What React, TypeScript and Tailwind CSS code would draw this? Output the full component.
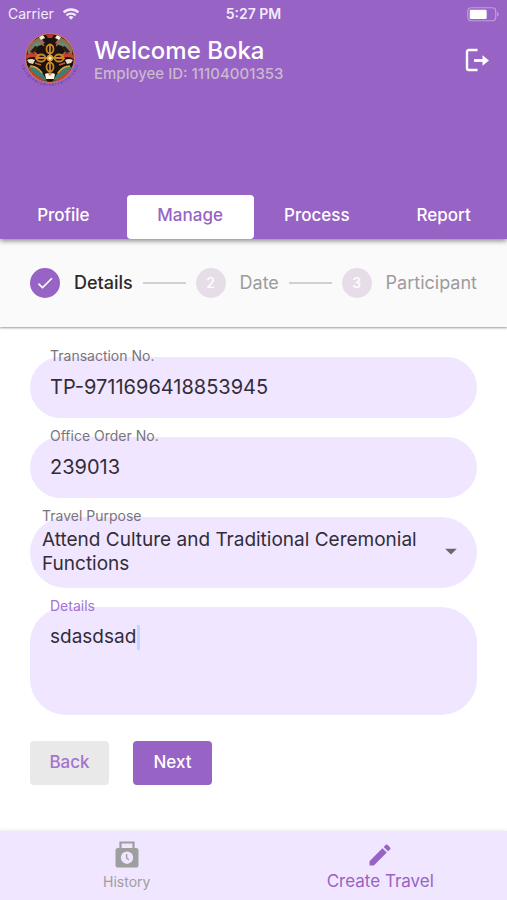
import { useState } from 'react';
import type { ReactNode } from 'react';
import { MdArrowDropDown, MdCheck, MdEdit } from 'react-icons/md';

const TABS = ['Profile', 'Manage', 'Process', 'Report'];

const STEPS = ['Details', 'Date', 'Participant'];

const PURPOSES = [
  'Attend Culture and Traditional Ceremonial Functions',
  'Attend Meeting',
  'Attend Training',
];

function WifiIcon() {
  return (
    <svg viewBox="0 0 18 13" className="h-3 w-[18px]" fill="none" stroke="currentColor" strokeWidth="2.5" aria-hidden="true">
      <path d="M1 4.8a11.6 11.6 0 0 1 16 0" />
      <path d="M4 8a7.4 7.4 0 0 1 10 0" />
      <path d="M9 12.8 6.3 10a4 4 0 0 1 5.4 0Z" fill="currentColor" stroke="none" />
    </svg>
  );
}

function BatteryIcon() {
  return (
    <svg viewBox="0 0 32 15" className="h-[15px] w-8" aria-hidden="true">
      <rect x="0.75" y="0.75" width="28" height="13" rx="3.5" fill="none" stroke="#c09fe2" strokeWidth="1.2" />
      <rect x="2.7" y="2.7" width="17" height="9.2" rx="1.2" fill="#fff" />
      <path d="M30.2 5v4.6c1-.3 1.5-1.2 1.5-2.3S31.2 5.3 30.2 5Z" fill="#c09fe2" />
    </svg>
  );
}

function LogoutIcon() {
  return (
    <svg viewBox="0 0 24 24" className="size-6" fill="none" stroke="currentColor" strokeWidth="2.4" aria-hidden="true">
      <path d="M12.500 2H4Q2 2 2 4v16Q2 22 4 22h8.500" />
      <path d="M9 12.500H19" strokeWidth="2.800" />
      <path d="M17.500 7.200 24 12.500l-6.500 5.300Z" fill="currentColor" stroke="none" />
    </svg>
  );
}

function HistoryIcon() {
  return (
    <svg viewBox="0 0 24 27" className="h-[27px] w-6" aria-hidden="true">
      <path d="M5.500 8V1.500h13V8" fill="none" stroke="currentColor" strokeWidth="2.200" />
      <rect x="0.500" y="7" width="23" height="19.500" rx="2.600" fill="currentColor" />
      <circle cx="12" cy="16.700" r="6.200" fill="#f0e6ff" />
      <path d="M11.600 13v4l2.200 1.800" fill="none" stroke="currentColor" strokeWidth="1.300" />
    </svg>
  );
}

function Emblem() {
  return (
    <svg viewBox="0 0 60 60" className="size-[60px]" role="img" aria-label="Emblem">
      <clipPath id="disc">
        <circle cx="30" cy="26" r="24" />
      </clipPath>
      <path d="M2.500 33A29 29 0 0 0 57.500 33" fill="none" stroke="#7a4fa3" strokeWidth="2.500" strokeDasharray="1.200 1.600 2 1.400 .8 1.800" />
      <circle cx="30" cy="26" r="25" fill="#d9744a" />
      <g clipPath="url(#disc)">
        <circle cx="30" cy="26" r="24" fill="#1c120f" />
        {/* clouds and dragons */}
        <path d="M7 17q5-9 13-12l5 6-7 3-3 6-7 3Z" fill="#8a6f5c" />
        <path d="M53 17q-5-9-13-12l-5 6 7 3 3 6 7 3Z" fill="#8a6f5c" />
        <path d="M12 15q3-5 8-5l2 3-6 1-2 5ZM48 15q-3-5-8-5l-2 3 6 1 2 5Z" fill="#5f8f74" />
        <path d="M10 20l5-6 3 1-4 6ZM50 20l-5-6-3 1 4 6Z" fill="#2a1a16" />
        <path d="M19 5l4-2 2 3-4 2ZM41 5l-4-2-2 3 4 2Z" fill="#f3ead9" />
        <path d="M26 3q4-3 8 0l-2 3h-4Z" fill="#b43a2c" />
        <path d="M5 24q7-5 14-1l-2 3q-6-3-12 2Z" fill="#c9412e" />
        <path d="M55 24q-7-5-14-1l2 3q6-3 12 2Z" fill="#c9412e" />
        <path d="M7 28q4-2 8 0l-2 4-4-1Z" fill="#e9ddc9" />
        <path d="M53 28q-4-2-8 0l2 4 4-1Z" fill="#e9ddc9" />
        <path d="M8 35q8-3 14 5l5 9q-13-1-19-14Z" fill="#3f7f70" />
        <path d="M52 35q-8-3-14 5l-5 9q13-1 19-14Z" fill="#3f7f70" />
        <path d="M10 34q7 0 12 7M50 34q-7 0-12 7" fill="none" stroke="#e0a33c" strokeWidth="1.500" />
        <path d="M9 38q8 9 15 11M51 38q-8 9-15 11" fill="none" stroke="#c9412e" strokeWidth="3" />
        <path d="M14 20l5 4-4 3M46 20l-5 4 4 3M15 31l6 2M45 31l-6 2M20 9l4 5M40 9l-4 5" fill="none" stroke="#c2643a" strokeWidth="1.500" />
        <path d="M25 42q5-3 10 0l-1 5h-8Z" fill="#fff6e6" />
        <path d="M27 41h6l-3 3Z" fill="#e08a5a" />
        {/* crossed vajra */}
        <g fill="none" stroke="#c9862b" strokeWidth="1.800">
          <path d="M30 12v28M16 26h28" />
          <ellipse cx="30" cy="17" rx="3.500" ry="4.500" />
          <ellipse cx="30" cy="35" rx="3.500" ry="4.500" />
          <ellipse cx="21" cy="26" rx="4.500" ry="3.500" />
          <ellipse cx="39" cy="26" rx="4.500" ry="3.500" />
        </g>
        <circle cx="30" cy="26" r="3.200" fill="#dba546" />
        <circle cx="30" cy="26" r="1.500" fill="#fff0c0" />
      </g>
    </svg>
  );
}

type FieldProps = { id: string; label: string; active?: boolean; inset?: boolean; children: ReactNode };

function Field({ id, label, active, inset, children }: FieldProps) {
  return (
    <div className="relative">
      <label
        htmlFor={id}
        className={`absolute -top-[11px] text-sm ${inset ? 'left-3' : 'left-5'} ${active ? 'text-[#a374d0]' : 'text-[#79747e]'}`}
      >
        {label}
      </label>
      {children}
    </div>
  );
}

export default function App() {
  const [tab, setTab] = useState('Manage');
  const [transactionNo, setTransactionNo] = useState('TP-9711696418853945');
  const [orderNo, setOrderNo] = useState('239013');
  const [purpose, setPurpose] = useState(PURPOSES[0]);
  const [details, setDetails] = useState('sdasdsad');

  return (
    <div className="flex min-h-screen flex-col bg-white font-['Inter',sans-serif] text-[#322d38]">
      {/* Header */}
      <header className="relative z-10 bg-[#9763c5] text-white shadow-[0_2px_5px_rgba(0,0,0,0.45)]">
        <div className="grid h-7 grid-cols-3 items-center px-2 text-sm">
          <div className="flex items-center gap-2 text-[#f3eafb]">
            Carrier
            <WifiIcon />
          </div>
          <div className="text-center font-semibold text-[#f3eafb]">5:27 PM</div>
          <div className="flex justify-end">
            <BatteryIcon />
          </div>
        </div>

        <div className="flex h-[167px] items-start justify-between pt-1 pr-[18px] pl-5">
          <div className="flex gap-3.5">
            <Emblem />
            <div className="pt-1">
              <h1 className="text-2xl leading-[30px] font-medium">Welcome Boka</h1>
              <p className="text-[15px] leading-4 font-medium text-[#cbb8cf]">Employee ID: 11104001353</p>
            </div>
          </div>
          <button type="button" aria-label="Log out" className="mt-4">
            <LogoutIcon />
          </button>
        </div>

        <nav className="grid grid-cols-4">
          {TABS.map((name) => (
            <button
              key={name}
              type="button"
              onClick={() => setTab(name)}
              className={`h-11 rounded pb-0.5 text-[17px] font-medium ${tab === name ? 'bg-white text-[#9763c5]' : 'text-white'}`}
            >
              {name}
            </button>
          ))}
        </nav>
      </header>

      {/* Stepper */}
      <ol className="flex h-[88px] items-center bg-[#fafafa] px-[30px] text-lg shadow-[0_1px_2px_rgba(0,0,0,0.4)]">
        {STEPS.map((step, i) => (
          <li key={step} className={`flex items-center ${i < STEPS.length - 1 ? 'flex-auto' : ''}`}>
            <span
              className={`flex size-[30px] items-center justify-center rounded-full text-white ${i === 0 ? 'bg-[#9763c5]' : 'bg-[#e6dde9] text-sm font-medium'}`}
            >
              {i === 0 ? <MdCheck className="size-5" /> : i + 1}
            </span>
            <span className={`ml-3.5 ${i === 0 ? 'font-medium text-[#2a2a2a]' : 'text-[#9c9c9c]'}`}>{step}</span>
            {i < STEPS.length - 1 && <span className="mx-2.5 h-0.5 flex-1 bg-[#d0d0d0]" />}
          </li>
        ))}
      </ol>

      {/* Form */}
      <form className="flex flex-col gap-[19px] px-[30px] pt-[30px]" onSubmit={(e) => e.preventDefault()}>
        <Field id="transaction" label="Transaction No.">
          <input
            id="transaction"
            value={transactionNo}
            onChange={(e) => setTransactionNo(e.target.value)}
            className="block h-[61px] w-full rounded-full bg-[#f0e6ff] px-5 pb-0.5 text-xl outline-none"
          />
        </Field>
        <Field id="order" label="Office Order No.">
          <input
            id="order"
            value={orderNo}
            onChange={(e) => setOrderNo(e.target.value)}
            className="block h-[61px] w-full rounded-full bg-[#f0e6ff] px-5 pb-0.5 text-xl outline-none"
          />
        </Field>
        <Field id="purpose" label="Travel Purpose" inset>
          <select
            id="purpose"
            value={purpose}
            onChange={(e) => setPurpose(e.target.value)}
            className="block h-[71px] w-full appearance-none rounded-full bg-[#f0e6ff] pr-10 pb-0.5 pl-3 text-[19px] leading-6 whitespace-pre-wrap outline-none"
          >
            {PURPOSES.map((p) => (
              <option key={p}>{p}</option>
            ))}
          </select>
          <MdArrowDropDown className="pointer-events-none absolute top-5 right-3 size-7 text-[#6b6570]" />
        </Field>
        <Field id="details" label="Details" active>
          <textarea
            id="details"
            value={details}
            onChange={(e) => setDetails(e.target.value)}
            className="block h-[108px] w-full resize-none rounded-[36px] bg-[#f0e6ff] px-5 pt-4 text-[19px] leading-7 caret-[#bcd4fb] outline-none"
          />
          <span className="absolute top-[18px] left-[107px] h-[25px] w-[3px] bg-[#c3d6fb]" />
        </Field>

        <div className="flex gap-6 pt-[7px] text-[17px] font-medium">
          <button type="button" className="h-11 w-[79px] rounded bg-[#e9e9e9] text-[#a374d0]">
            Back
          </button>
          <button type="submit" className="h-11 w-[79px] rounded bg-[#9763c5] text-white">
            Next
          </button>
        </div>
      </form>

      {/* Bottom bar */}
      <nav className="mt-auto grid h-[69px] grid-cols-2 bg-[#f0e6ff] shadow-[0_-1px_3px_rgba(0,0,0,0.08)]">
        <a href="#history" className="flex flex-col items-center pt-2.5 text-sm text-[#9e9e9e]">
          <HistoryIcon />
          <span className="pt-1">History</span>
        </a>
        <a href="#create" className="flex flex-col items-center pt-2.5 text-[17px] text-[#9763c5]">
          <MdEdit className="size-7" />
          <span className="leading-6">Create Travel</span>
        </a>
      </nav>
    </div>
  );
}
